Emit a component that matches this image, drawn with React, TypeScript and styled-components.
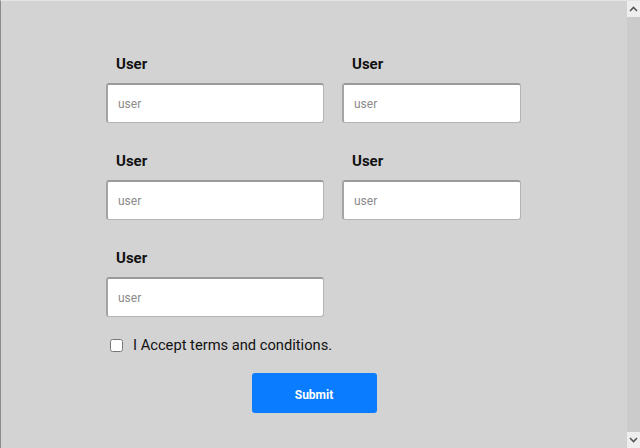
import React from "react";
import styled, { createGlobalStyle } from "styled-components";

const Global = createGlobalStyle`
  html, body { margin: 0; padding: 0; }
  body { background: #d3d3d3; font-family: Roboto, "Liberation Sans", Arial, sans-serif; }
`;

const Frame = styled.div`
  display: flex;
  width: 640px;
  height: 448px;
  box-sizing: border-box;
  border-left: 1px solid #8c8c8c;
  border-top: 1px solid #e4e4e4;
  background: #d3d3d3;
  overflow: hidden;
`;

const Main = styled.div`
  flex: 1;
  padding: 53px 0 0 105px;
`;

const Form = styled.form`
  width: 416px;
  display: flex;
  flex-direction: column;
`;

const Grid = styled.div`
  display: grid;
  grid-template-columns: 218px 179px;
  column-gap: 18px;
  row-gap: 28px;
`;

const Field = styled.div`
  display: flex;
  flex-direction: column;
  gap: 9px;
`;

const Label = styled.label`
  padding-left: 10px;
  font-size: 15px;
  line-height: 20px;
  font-weight: 700;
  color: #111;
`;

const Input = styled.input`
  box-sizing: border-box;
  width: 100%;
  height: 40px;
  padding: 0 10px;
  border: 1px solid #b4b4b4;
  border-top: 2px solid #9a9a9a;
  border-left: 2px solid #a4a4a4;
  border-radius: 3px;
  background: #fff;
  font-family: Roboto, "Liberation Sans", Arial, sans-serif;
  font-size: 12px;
  outline: none;
  &::placeholder { color: #8a8a8a; }
`;

const CheckRow = styled.label`
  display: flex;
  align-items: center;
  gap: 10px;
  margin-top: 18px;
  padding-left: 4px;
  font-size: 14.7px;
  line-height: 20px;
  color: #111;
`;

const Box = styled.input`
  width: 13px;
  height: 13px;
  margin: 0;
`;

const Submit = styled.button`
  align-self: center;
  margin-top: 18px;
  width: 125px;
  height: 40px;
  padding: 3px 0 0;
  border: none;
  border-radius: 3px;
  background: #0a7cff;
  color: #fff;
  font-family: Roboto, "Liberation Sans", Arial, sans-serif;
  font-weight: 700;
  font-size: 12px;
`;

const Scrollbar = styled.div`
  width: 13px;
  display: flex;
  flex-direction: column;
  background: #cbcbcb;
`;

const Arrow = styled.div`
  height: 16px;
  background: #eeeeee;
  display: flex;
  align-items: center;
  justify-content: center;
`;

const Track = styled.div`
  flex: 1;
`;

const Chevron = ({ up }: { up?: boolean }) => (
  <svg width="9" height="6" viewBox="0 0 9 6">
    <path
      d={up ? "M1 5 L4.5 1.5 L8 5" : "M1 1 L4.5 4.5 L8 1"}
      fill="none"
      stroke="#555"
      strokeWidth="1.6"
    />
  </svg>
);

const fields = [0, 1, 2, 3, 4];

export default function App() {
  return (
    <>
      <Global />
      <Frame>
        <Main>
          <Form onSubmit={(e) => e.preventDefault()}>
            <Grid>
              {fields.map((i) => (
                <Field key={i}>
                  <Label>User</Label>
                  <Input placeholder="user" />
                </Field>
              ))}
            </Grid>
            <CheckRow>
              <Box type="checkbox" />
              I Accept terms and conditions.
            </CheckRow>
            <Submit type="submit">Submit</Submit>
          </Form>
        </Main>
        <Scrollbar>
          <Arrow>
            <Chevron up />
          </Arrow>
          <Track />
          <Arrow>
            <Chevron />
          </Arrow>
        </Scrollbar>
      </Frame>
    </>
  );
}
